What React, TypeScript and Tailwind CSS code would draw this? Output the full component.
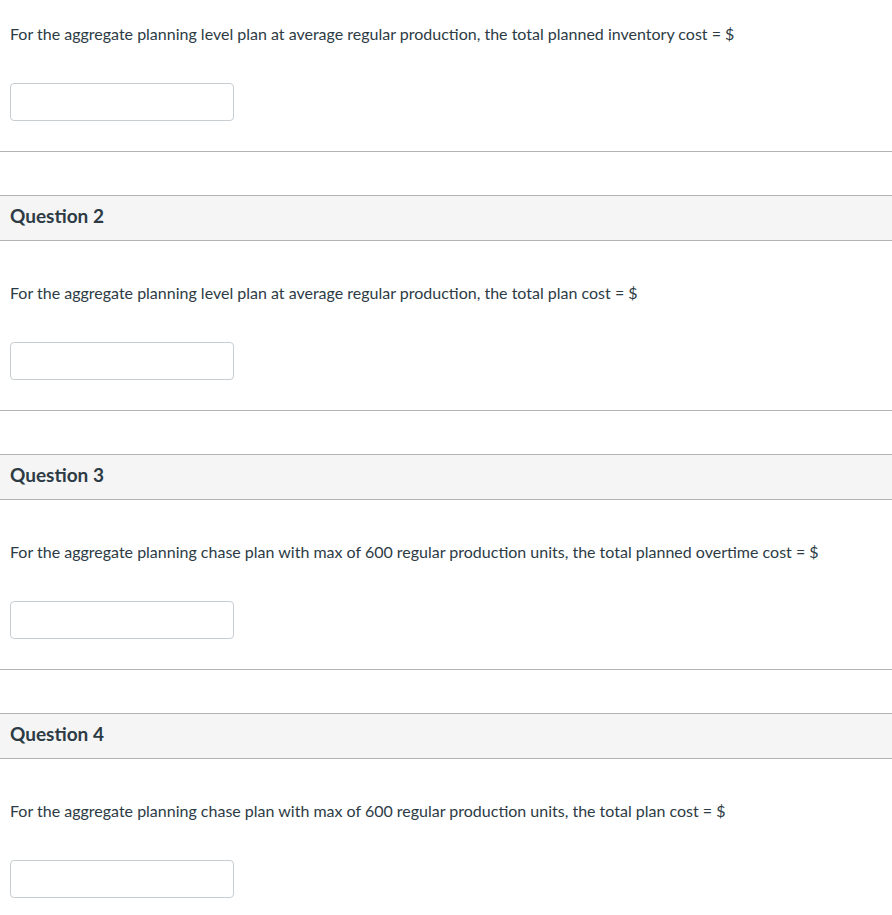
import React from 'react';

const questions = [
  { num: 1, text: 'For the aggregate planning level plan at average regular production, the total planned inventory cost = $' },
  { num: 2, text: 'For the aggregate planning level plan at average regular production, the total plan cost = $' },
  { num: 3, text: 'For the aggregate planning chase plan with max of 600 regular production units, the total planned overtime cost = $' },
  { num: 4, text: 'For the aggregate planning chase plan with max of 600 regular production units, the total plan cost = $' },
];

const Body = ({ text, top }: { text: string; top: string }) => (
  <div className={`px-[10px] ${top}`}>
    <p className="text-[16px] leading-[20px] text-[#2d3b45]">{text}</p>
    <input
      type="text"
      className="mt-[39px] block w-[224px] h-[38px] rounded-[4px] border border-[#c7cdd1] bg-white outline-none"
    />
    <div className="h-[30px]" />
  </div>
);

export default function App() {
  return (
    <div className="w-[892px] bg-white" style={{ fontFamily: 'Lato, "Noto Sans", sans-serif' }}>
      {questions.map((q, i) => (
        <div key={q.num}>
          {i > 0 && (
            <div className="mt-[43px] h-[46px] flex items-center px-[10px] pb-[4px] bg-[#f5f5f5] border-y border-[#b3b3b3]">
              <h2 className="text-[19px] leading-[24px] font-bold text-[#2d3b45]">Question {q.num}</h2>
            </div>
          )}
          <Body text={q.text} top={i === 0 ? 'pt-[24px]' : 'pt-[42px]'} />
          {i < questions.length - 1 && <div className="border-t border-[#b3b3b3]" />}
        </div>
      ))}
    </div>
  );
}
